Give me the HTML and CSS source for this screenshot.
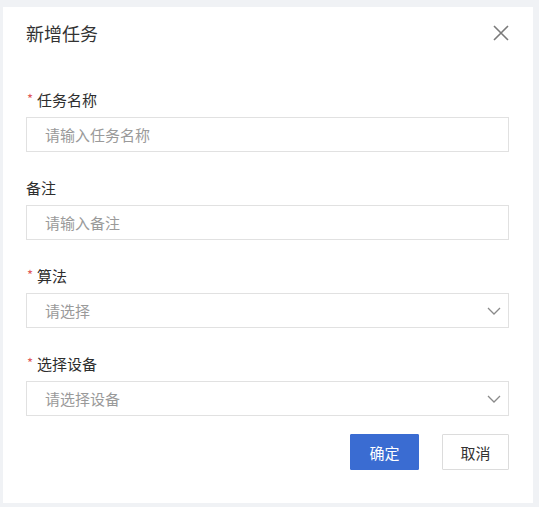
FILE: index.html
```html
<!DOCTYPE html>
<html lang="zh-CN">
<head>
<meta charset="utf-8">
<title>新增任务</title>
<link rel="stylesheet" href="styles.css">
</head>
<body>
<div class="dialog">
  <div class="dialog-header">
    <span class="dialog-title">新增任务</span>
    <button class="dialog-close" aria-label="关闭">
      <svg width="16" height="16" viewBox="0 0 16 16"><path d="M1 1 L15 15 M15 1 L1 15" stroke="#7a7a7a" stroke-width="1.6" fill="none"/></svg>
    </button>
  </div>
  <form class="form">
    <div class="form-item">
      <label class="form-label required">任务名称</label>
      <div class="control"><span class="placeholder">请输入任务名称</span></div>
    </div>
    <div class="form-item">
      <label class="form-label">备注</label>
      <div class="control"><span class="placeholder">请输入备注</span></div>
    </div>
    <div class="form-item">
      <label class="form-label required">算法</label>
      <div class="control select"><span class="placeholder">请选择</span>
        <svg class="chevron" width="14" height="8" viewBox="0 0 14 8"><path d="M1 1 L7 7 L13 1" stroke="#8a8a8a" stroke-width="1.3" fill="none"/></svg>
      </div>
    </div>
    <div class="form-item">
      <label class="form-label required">选择设备</label>
      <div class="control select"><span class="placeholder">请选择设备</span>
        <svg class="chevron" width="14" height="8" viewBox="0 0 14 8"><path d="M1 1 L7 7 L13 1" stroke="#8a8a8a" stroke-width="1.3" fill="none"/></svg>
      </div>
    </div>
    <div class="actions">
      <button type="button" class="btn btn-primary">确定</button>
      <button type="button" class="btn btn-default">取消</button>
    </div>
  </form>
</div>
</body>
</html>
```
FILE: styles.css
```css
* { box-sizing: border-box; }
html, body { margin: 0; padding: 0; }
body {
  background: #f0f2f5;
  font-family: "Noto Sans CJK SC", "Noto Sans", sans-serif;
  color: #333;
  width: 539px;
  height: 507px;
  overflow: hidden;
  padding: 7px 0 0 3px;
}
.dialog {
  width: 530px;
  height: 496px;
  background: #fff;
  padding: 13px 24px 0 23px;
}
.dialog-header {
  display: flex;
  align-items: center;
  justify-content: space-between;
  height: 26px;
}
.dialog-title {
  font-size: 18px;
  line-height: 26px;
  color: #333;
}
.dialog-close {
  border: none;
  background: none;
  padding: 0;
  width: 16px;
  height: 16px;
  display: flex;
}
.form {
  margin-top: 44px;
}
.form-item {
  display: flex;
  flex-direction: column;
  gap: 7px;
  margin-bottom: 26px;
}
.form-label {
  display: block;
  height: 20px;
  font-size: 15px;
  line-height: 20px;
  color: #2e2e2e;
}
.form-label.required::before {
  content: "*";
  color: #e05a5a;
  margin-right: 4px;
  margin-left: 1px;
  font-size: 13px;
  line-height: 1;
  vertical-align: 2px;
}
.control {
  height: 35px;
  border: 1px solid #e1e1e1;
  background: #fff;
  display: flex;
  align-items: center;
  justify-content: space-between;
  padding: 0 7px 0 18px;
}
.placeholder {
  font-size: 15px;
  color: #9a9a9a;
}
.chevron { display: block; }
.actions {
  display: flex;
  justify-content: flex-end;
  gap: 23px;
  margin-top: -8px;
}
.btn {
  height: 36px;
  font-family: inherit;
  font-size: 15px;
  padding: 0;
  border-radius: 1px;
}
.btn-primary {
  width: 69px;
  background: #3a6cd2;
  border: 1px solid #3a6cd2;
  color: #fff;
}
.btn-default {
  width: 67px;
  background: #fff;
  border: 1px solid #dcdcdc;
  color: #333;
}
```
